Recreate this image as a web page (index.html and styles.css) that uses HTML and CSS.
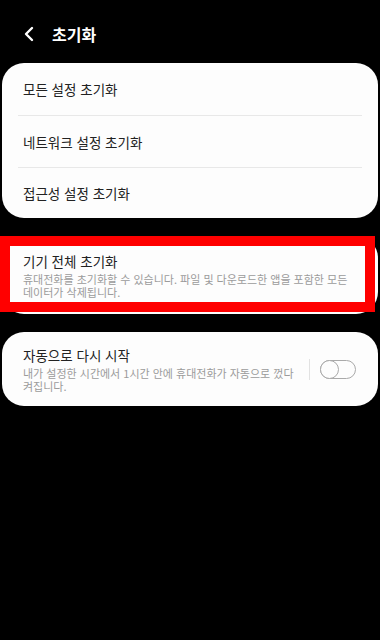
FILE: index.html
```html
<!DOCTYPE html>
<html lang="ko">

<head>
    <meta charset="UTF-8">
    <meta name="viewport" content="width=device-width, initial-scale=1.0">
    <title>초기화</title>
    <link rel="stylesheet" href="styles.css">
</head>

<body>
    <div class="screen">
        <div class="header">
            <svg class="back" width="12" height="16" viewBox="0 0 12 16">
                <path d="M9 2 L3 8 L9 14" fill="none" stroke="#fff" stroke-width="2.4" stroke-linecap="round" stroke-linejoin="round" />
            </svg>
            <div class="title">초기화</div>
        </div>

        <div class="card">
            <div class="row">모든 설정 초기화</div>
            <div class="row">네트워크 설정 초기화</div>
            <div class="row">접근성 설정 초기화</div>
        </div>

        <div class="card item marked">
            <div class="text">
                <div class="item-title">기기 전체 초기화</div>
                <div class="item-sub">휴대전화를 초기화할 수 있습니다. 파일 및 다운로드한 앱을 포함한 모든 데이터가 삭제됩니다.</div>
            </div>
        </div>

        <div class="card item">
            <div class="text short">
                <div class="item-title">자동으로 다시 시작</div>
                <div class="item-sub">내가 설정한 시간에서 1시간 안에 휴대전화가 자동으로 껐다 켜집니다.</div>
            </div>
            <div class="divider"></div>
            <div class="switch"><span class="knob"></span></div>
        </div>
    </div>
</body>

</html>
```

FILE: styles.css
```css
* {
    margin: 0;
    padding: 0;
    box-sizing: border-box;
    font-family: "Noto Sans CJK KR", "Noto Sans", sans-serif;
    word-break: keep-all;
}

body {
    background: #000;
}

.screen {
    width: 380px;
    height: 640px;
    background: #000;
    display: flex;
    flex-direction: column;
    gap: 18px;
}

.header {
    height: 45px;
    display: flex;
    align-items: center;
    padding: 23px 0 0 23px;
    gap: 17px;
}

.back {
    display: block;
}

.title {
    color: #fff;
    font-size: 16px;
    font-weight: bold;
    line-height: 20px;
}

.card {
    margin: 0 2px;
    background: #fdfdfd;
    border-radius: 22px;
}

.row {
    height: 52px;
    padding: 0 21px;
    display: flex;
    align-items: center;
    font-size: 13.5px;
    color: #222;
}

.row + .row {
    border-top: 1px solid #e8e8e8;
    margin: 0 16px;
    padding: 0 5px;
}

.row:first-child {
    margin-right: 16px;
    padding-right: 5px;
}

.row:last-child {
    height: 51px;
}

.item {
    display: flex;
    align-items: center;
    padding: 16px 12px 15px 21px;
}

.text {
    flex: 1;
    max-width: 330px;
}

.text.short {
    max-width: 280px;
}

.item-title {
    font-size: 13.5px;
    line-height: 18px;
    color: #222;
}

.item-sub {
    margin-top: 3px;
    font-size: 11px;
    line-height: 13px;
    color: #9b9b9b;
}

.card.item:last-child {
    padding: 14px 22px 13px 21px;
}

.marked {
    position: relative;
}

.marked::after {
    content: "";
    position: absolute;
    top: 0;
    left: -2px;
    right: 3px;
    bottom: 2px;
    border: 10px solid #ff0000;
}

.divider {
    width: 1px;
    height: 21px;
    background: #e2e2e2;
    margin: 0 10px 0 auto;
}

.switch {
    width: 36px;
    height: 19px;
    border: 1.3px solid #a9a9a9;
    border-radius: 10px;
    position: relative;
}

.knob {
    position: absolute;
    left: -1.3px;
    top: -1.3px;
    width: 19px;
    height: 19px;
    border: 1.3px solid #a9a9a9;
    border-radius: 50%;
    background: #fdfdfd;
}
```
